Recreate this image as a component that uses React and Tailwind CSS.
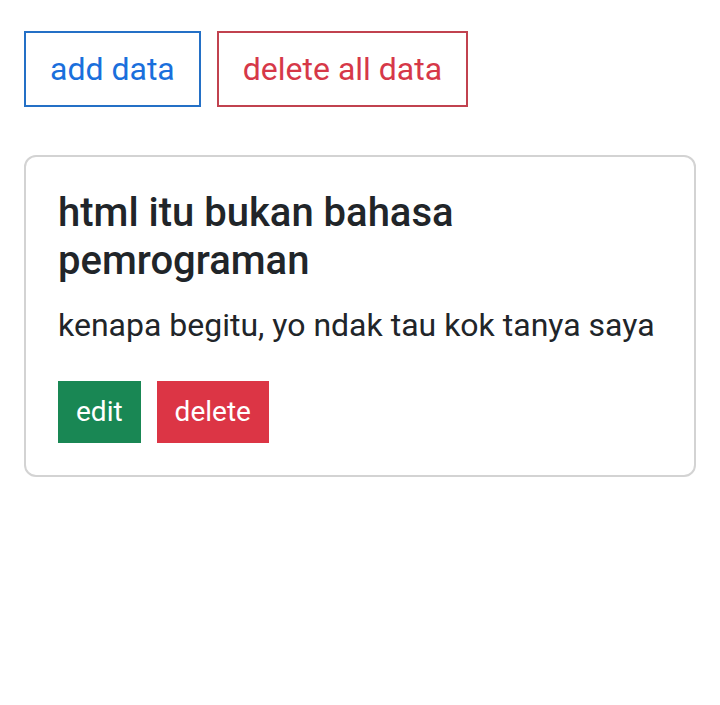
import React from 'react';

const App = () => {
  return (
    <div className="min-h-[705px] bg-white px-[24px] pt-[31px] text-[#212529] font-['Roboto',sans-serif]">
      <div className="flex gap-[16px]">
        <button className="border-2 border-[#2470c6] px-[24px] py-[12px] text-[32px] leading-[48px] text-[#1a6fdc]">
          add data
        </button>
        <button className="border-2 border-[#c1424f] px-[24px] py-[12px] text-[32px] leading-[48px] text-[#d63848]">
          delete all data
        </button>
      </div>

      <div className="mt-[48px] rounded-[12px] border-2 border-[#d3d3d3] p-[32px]">
        <h5 className="mb-[16px] text-[40px] font-medium leading-[48px]">
          html itu bukan bahasa pemrograman
        </h5>
        <p className="mb-[32px] text-[32px] leading-[48px]">
          kenapa begitu, yo ndak tau kok tanya saya
        </p>
        <div className="flex gap-[16px]">
          <button className="border-2 border-[#198754] bg-[#198754] px-[16px] py-[8px] text-[28px] leading-[42px] text-white">
            edit
          </button>
          <button className="border-2 border-[#dc3545] bg-[#dc3545] px-[16px] py-[8px] text-[28px] leading-[42px] text-white">
            delete
          </button>
        </div>
      </div>
    </div>
  );
};

export default App;
